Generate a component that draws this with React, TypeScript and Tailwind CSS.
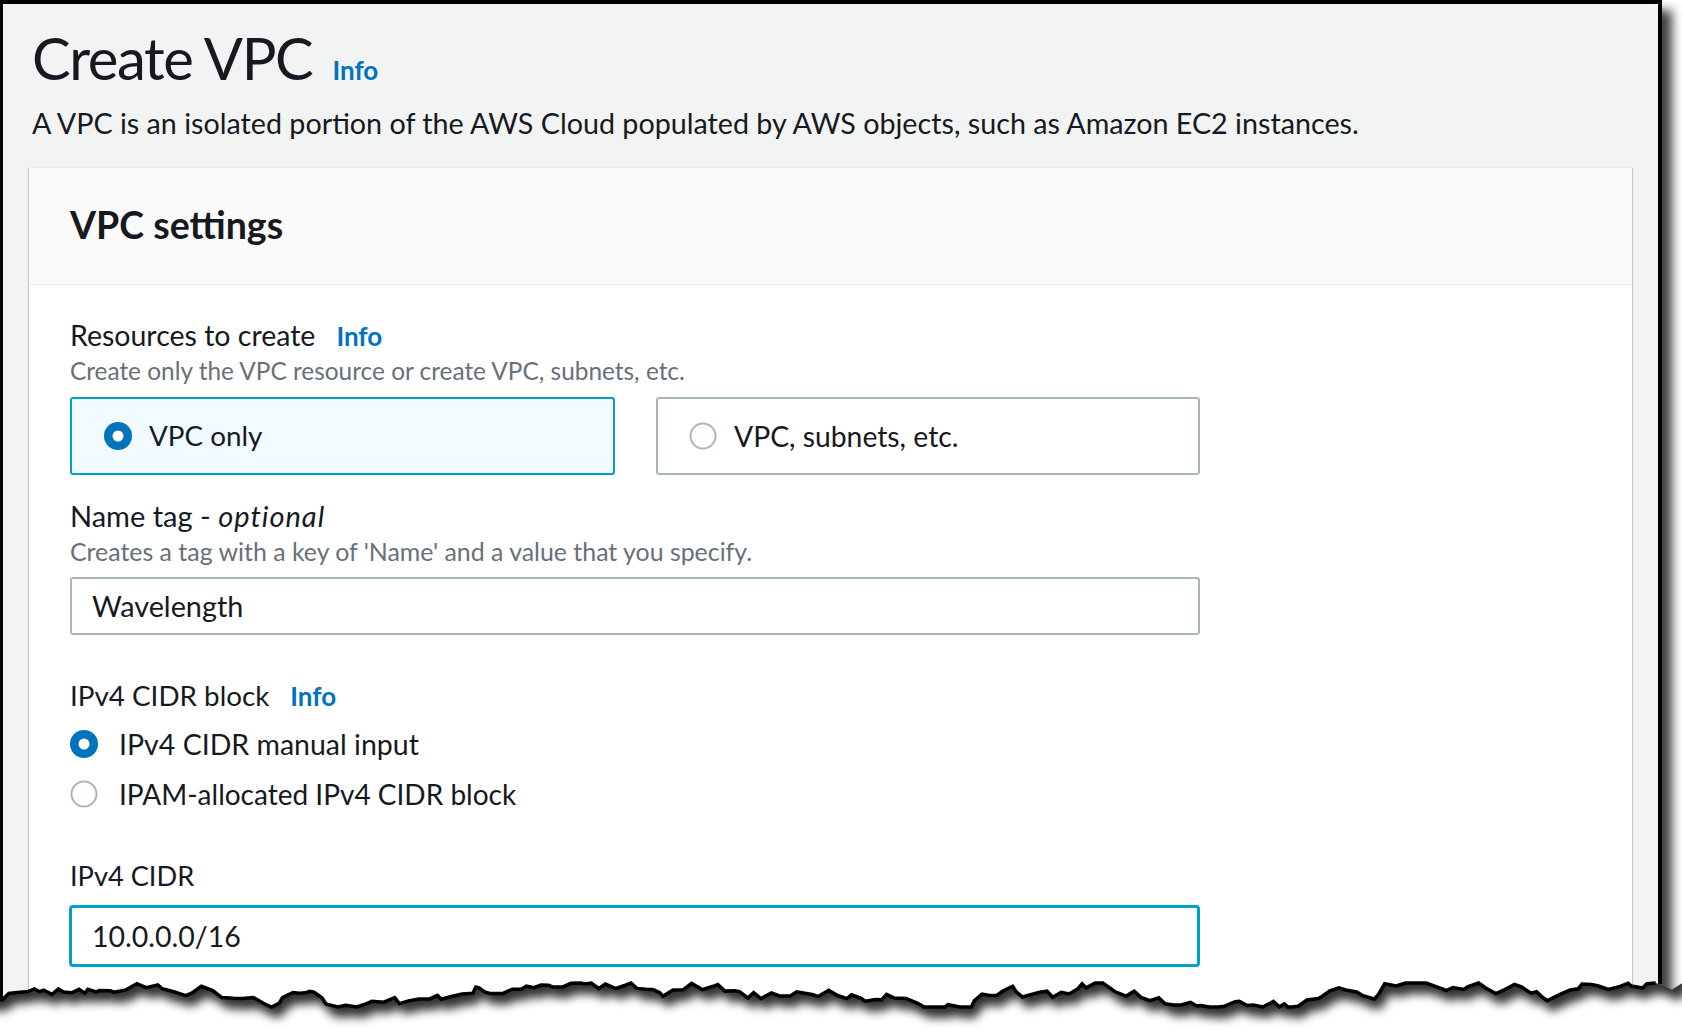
import React from "react";

type RadioProps = { checked?: boolean };

function Radio({ checked }: RadioProps) {
  if (checked) {
    return (
      <svg width="28" height="28" viewBox="0 0 28 28" className="shrink-0">
        <circle cx="14" cy="14" r="14" fill="#0073bb" />
        <circle cx="14" cy="14" r="5.5" fill="#ffffff" />
      </svg>
    );
  }
  return (
    <svg width="28" height="28" viewBox="0 0 28 28" className="shrink-0">
      <circle cx="14" cy="14" r="12.5" fill="#ffffff" stroke="#aab7b8" strokeWidth="2" />
    </svg>
  );
}

function Info({ className = "" }: { className?: string }) {
  return <span className={`font-bold text-[#0073bb] ${className}`}>Info</span>;
}

// jagged "torn paper" line along the bottom of the screenshot
function tearPoints() {
  let seed = 11;
  const rnd = () => {
    seed = (seed * 16807) % 2147483647;
    return seed / 2147483647;
  };
  const pts: [number, number][] = [];
  let x = 0;
  let y = 40;
  while (x < 1682) {
    pts.push([x, y]);
    x += 3 + rnd() * 9;
    y += (rnd() - 0.5) * 13;
    y = Math.max(23, Math.min(47, y));
  }
  pts.push([1682, y]);
  return pts;
}

function TornEdge() {
  const pts = tearPoints();
  const line = pts.map(([x, y]) => `${x.toFixed(1)},${y.toFixed(1)}`).join(" ");
  const below = `0,80 ${line} 1682,80`;
  const shifted = pts.map(([x, y]) => `${(x + 5).toFixed(1)},${(y + 11).toFixed(1)}`).join(" ");
  const shadow = `-20,-60 -20,51 ${shifted} 1700,-60`;
  const stroke = pts.filter(([x]) => x <= 1662);

  return (
    <svg className="absolute left-0 top-[960px]" width="1682" height="72" viewBox="0 0 1682 72">
      <defs>
        <filter id="tear-blur" x="-5%" y="-100%" width="110%" height="300%">
          <feGaussianBlur stdDeviation="5" />
        </filter>
        <clipPath id="tear-below">
          <polygon points={below} />
        </clipPath>
      </defs>
      <polygon points={below} fill="#ffffff" />
      <g clipPath="url(#tear-below)">
        <polygon points={shadow} fill="rgba(0,0,0,0.8)" filter="url(#tear-blur)" />
      </g>
      <polyline
        points={stroke.map(([x, y]) => `${x.toFixed(1)},${y.toFixed(1)}`).join(" ")}
        fill="none"
        stroke="#000000"
        strokeWidth="3.5"
        strokeLinejoin="miter"
      />
    </svg>
  );
}

export default function App() {
  return (
    <div className="relative h-[1032px] w-[1682px] overflow-hidden bg-white font-['Lato',sans-serif] text-[#16191f]">
      <div className="h-[1032px] w-[1662px] border-l-[3px] border-r-4 border-t-4 border-black bg-[#f2f3f3] pl-[26px] shadow-[10px_10px_10px_rgba(0,0,0,0.75)]">
        <div className="flex items-baseline gap-[20px] pl-[3px] pt-[19px]">
          <h1 className="text-[58px] leading-[70px] tracking-[-1.4px]">Create VPC</h1>
          <Info className="text-[26px]" />
        </div>
        <p className="mt-[12px] pl-[3px] text-[28.7px] leading-[36px]">
          A VPC is an isolated portion of the AWS Cloud populated by AWS objects, such as Amazon EC2 instances.
        </p>

        <div className="mt-[26px] h-[900px] w-[1603px] border-t border-[#eaeded] bg-white shadow-[0_1px_1px_0_rgba(0,28,36,0.3),1px_1px_1px_0_rgba(0,28,36,0.15),-1px_1px_1px_0_rgba(0,28,36,0.15)]">
          <div className="border-b border-[#eaeded] bg-[#fafafa] pb-[37px] pl-[41px] pt-[35px]">
            <h2 className="text-[37.5px] font-bold leading-[44px]">VPC settings</h2>
          </div>

          <div className="w-[1171px] pl-[41px] pt-[34px]">
            <div className="flex items-baseline gap-[21px] text-[28.5px] leading-[32px]">
              <span>Resources to create</span>
              <Info className="text-[26px]" />
            </div>
            <p className="mt-[4px] text-[24.4px] leading-[30px] text-[#687078]">
              Create only the VPC resource or create VPC, subnets, etc.
            </p>
            <div className="mt-[11px] flex gap-[41px]">
              <div className="flex h-[78px] flex-1 items-center gap-[17px] rounded-[3px] border-2 border-[#00a1c9] bg-[#f1faff] pl-[32px] text-[27.8px]">
                <Radio checked />
                <span>VPC only</span>
              </div>
              <div className="flex h-[78px] flex-1 items-center gap-[17px] rounded-[3px] border-2 border-[#aab7b8] bg-white pl-[31px] text-[28.3px]">
                <Radio />
                <span>VPC, subnets, etc.</span>
              </div>
            </div>

            <div className="mt-[24px] text-[29px] leading-[34px]">
              Name tag - <i className="tracking-[1px]">optional</i>
            </div>
            <p className="mt-[3px] text-[24.9px] leading-[30px] text-[#687078]">
              Creates a tag with a key of 'Name' and a value that you specify.
            </p>
            <div className="mt-[11px] flex h-[58px] items-center rounded-[3px] border-2 border-[#aab7b8] pl-[20px] text-[28.8px] leading-[34px]">
              Wavelength
            </div>

            <div className="mt-[44px] flex items-baseline gap-[21px] text-[27.8px] leading-[34px]">
              <span>IPv4 CIDR block</span>
              <Info className="text-[26px]" />
            </div>
            <div className="mt-[6px] flex flex-col">
              <div className="flex h-[50px] items-center gap-[21px] text-[28.5px] leading-[34px]">
                <Radio checked />
                <span>IPv4 CIDR manual input</span>
              </div>
              <div className="flex h-[50px] items-center gap-[21px] text-[28px] leading-[34px]">
                <Radio />
                <span>IPAM-allocated IPv4 CIDR block</span>
              </div>
            </div>

            <div className="mt-[40px] text-[27.2px] leading-[34px]">IPv4 CIDR</div>
            <div className="-ml-px mt-[12px] flex h-[62px] w-[1131px] items-center rounded-[4px] border-[3px] border-[#00a1c9] pl-[20px] text-[28.5px] leading-[34px]">
              10.0.0.0/16
            </div>
          </div>
        </div>
      </div>
      <TornEdge />
    </div>
  );
}
